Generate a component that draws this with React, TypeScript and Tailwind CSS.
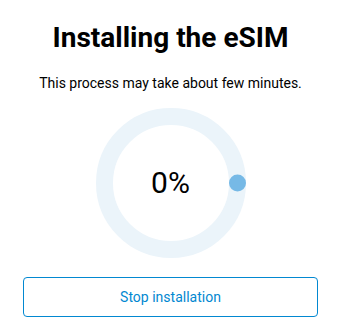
export default function App() {
  const progress = 0;
  const size = 150;
  const stroke = 17;
  const r = (size - stroke) / 2;
  const c = size / 2;
  const angle = (progress / 100) * 2 * Math.PI;
  const dotX = c + r * Math.cos(angle);
  const dotY = c + r * Math.sin(angle);

  return (
    <div className="w-[341px] h-[336px] bg-white flex flex-col items-center pt-5 font-['Roboto',sans-serif] text-black">
      <h1 className="text-[28px] leading-[36px] font-bold">Installing the eSIM</h1>
      <p className="mt-[17px] text-[14px] leading-5">This process may take about few minutes.</p>

      <div className="relative mt-[15px] w-[150px] h-[150px]">
        <svg width={size} height={size} viewBox={`0 0 ${size} ${size}`} className="absolute inset-0">
          <circle cx={c} cy={c} r={r} fill="none" stroke="#EBF4FA" strokeWidth={stroke} />
          <circle cx={dotX} cy={dotY} r={8.5} fill="#76B9E6" />
        </svg>
        <div className="absolute inset-0 flex items-center justify-center text-[30px] leading-none">
          {progress}%
        </div>
      </div>

      <button className="mt-[19px] w-[295px] h-10 rounded border border-[#0288D1] text-[#0288D1] text-[14px]">
        Stop installation
      </button>
    </div>
  );
}
